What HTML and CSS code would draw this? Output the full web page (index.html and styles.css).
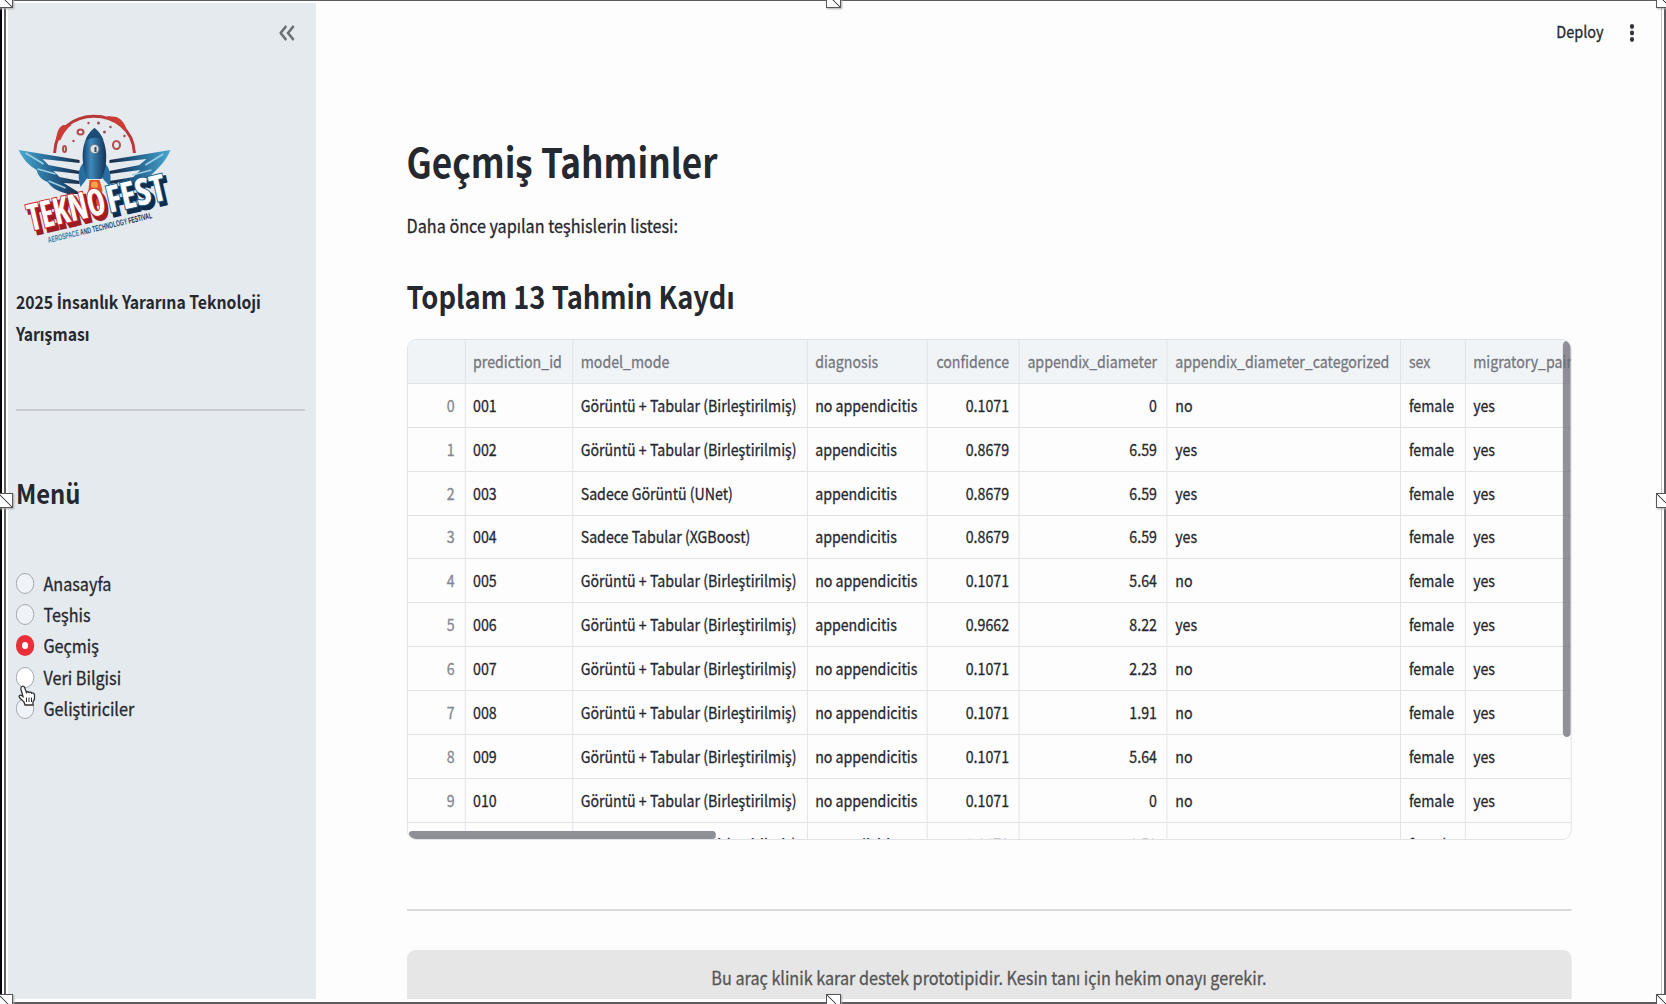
FILE: index.html
```html
<!DOCTYPE html>
<html lang="tr">
<head>
<meta charset="utf-8">
<title>Geçmiş Tahminler</title>
<link rel="stylesheet" href="styles.css">
</head>
<body>
<div class="stage">
  <div class="app">
    <aside class="sidebar">
      <div class="collapse">
        <svg width="18" height="16" viewBox="0 0 18 16"><path d="M8 1 1.500 8 8 15M16.500 1 10 8 16.500 15" fill="none" stroke="#6b6e75" stroke-width="2.600"/></svg>
      </div>
      <svg class="logo" width="178" height="136" viewBox="0 0 156 136" preserveAspectRatio="none">
        <defs>
          <linearGradient id="wing" x1="0" x2="1"><stop offset="0" stop-color="#49a9d2"/><stop offset=".6" stop-color="#215b86"/><stop offset="1" stop-color="#1b2740"/></linearGradient>
          <linearGradient id="wing2" x1="1" x2="0"><stop offset="0" stop-color="#49a9d2"/><stop offset=".6" stop-color="#215b86"/><stop offset="1" stop-color="#1b2740"/></linearGradient>
          <linearGradient id="hull" x1="0" x2="1"><stop offset="0" stop-color="#15406c"/><stop offset=".35" stop-color="#3f8abb"/><stop offset="1" stop-color="#123358"/></linearGradient>
        </defs>
        <path d="M37 39C39-10 114-10 117 39" fill="none" stroke="#b9383a" stroke-width="3"/>
        <path d="M38 27C40 17 41 13 46 11L54 11C49 15 46 19 43 26ZM90 2 99 3C104 5 108 10 110 18 104 14 99 8 90 5Z" fill="#cc3b34"/>
        <g fill="none" stroke="#b34a4d" stroke-width="2"><ellipse cx="63" cy="18" rx="3" ry="2.500"/><ellipse cx="99" cy="31" rx="3.500" ry="4"/><ellipse cx="47" cy="35" rx="1.500" ry="3"/></g>
        <g fill="#a05058"><circle cx="71" cy="9" r="1.200"/><circle cx="81" cy="9" r="1.500"/><circle cx="87" cy="18" r="1.500"/><circle cx="56" cy="27" r="1.200"/><circle cx="107" cy="22" r="1.300"/><circle cx="93" cy="13" r="1.200"/></g>
        <path d="M1 36 62 46V49L25 45 31 51 62 57V60L36 57 42 63 62 67V70L46 69 64 80H50C40 77 34 74 30 68 24 66 20 61 19 56 12 52 5 45 1 36Z" fill="url(#wing)"/>
        <path d="M8 39 26 50M20 55 38 60M31 67 48 74" stroke="#9fcfe4" stroke-width="1.500"/>
        <path d="M153 36 92 46V49L129 45 122 51 92 57V60L123 56 116 63 92 67V70L112 67 98 75 128 66C135 60 149 48 153 36Z" fill="url(#wing2)"/>
        <path d="M146 40 128 51M134 56 115 61" stroke="#9fcfe4" stroke-width="1.500"/>
        <path d="M67 48C59 54 61 66 63 73L72 61ZM86 48C94 54 94 66 92 72L82 61Z" fill="#286d9f"/>
        <path d="M77 14C62 26 63 49 70 65H84C92 48 90 24 77 14Z" fill="url(#hull)"/>
        <path d="M77 14C72 18 69 22 68 27Q77 21 86 26C84 21 81 17 77 14Z" fill="#1d4c76"/>
        <circle cx="77" cy="35" r="4.500" fill="#dfe3e2" stroke="#61788b"/><path d="M78 33V38" stroke="#37465a" stroke-width="2"/>
        <path d="M72 66H82L85 76 82 92H74L71 76Z" fill="#e65228"/><circle cx="77" cy="71" r="3.500" fill="#fba447"/>
        <g transform="translate(13 116) rotate(-13)" class="wordmark">
          <text x="2" y="5" textLength="79" lengthAdjust="spacingAndGlyphs" fill="#9c1c24" stroke="#9c1c24" stroke-width="3.500">TEKNO</text>
          <text x="83" y="5" textLength="60" lengthAdjust="spacingAndGlyphs" fill="#102c4b" stroke="#102c4b" stroke-width="3.500">FEST</text>
          <text x="0" y="1" textLength="79" lengthAdjust="spacingAndGlyphs" fill="#fff" stroke="#c8242c" stroke-width="2">TEKNO</text>
          <text x="81" y="1" textLength="60" lengthAdjust="spacingAndGlyphs" fill="#fff" stroke="#22608f" stroke-width="2">FEST</text>
        </g>
        <text class="tagline" transform="translate(31 129) rotate(-13.500)" textLength="107" lengthAdjust="spacingAndGlyphs"><tspan fill="#367ea8">AEROSPACE </tspan><tspan fill="#234f77">AND TECHNOLOGY </tspan><tspan fill="#1c2940">FESTIVAL</tspan></text>
      </svg>
      <p class="contest">2025 <span class="dotted-i">İ</span>nsanlık Yararına Teknoloji Yarışması</p>
      <hr class="side-rule">
      <h3 class="menu-title">Menü</h3>
      <nav class="menu">
        <label><i class="radio"></i>Anasayfa</label>
        <label><i class="radio"></i>Teşhis</label>
        <label><i class="radio on"></i>Geçmiş</label>
        <label><i class="radio hover"></i>Veri Bilgisi</label>
        <label><i class="radio"></i>Geliştiriciler</label>
      </nav>
    </aside>
    <main class="main">
      <header class="toolbar"><span>Deploy</span><svg width="6" height="20" viewBox="0 0 6 20" fill="#31333f"><circle cx="3" cy="3.500" r="2.400"/><circle cx="3" cy="10" r="2.400"/><circle cx="3" cy="16.500" r="2.400"/></svg></header>
      <h1>Geçmiş Tahminler</h1>
      <p class="lead">Daha önce yapılan teşhislerin listesi:</p>
      <h2>Toplam 13 Tahmin Kaydı</h2>
      <div class="table" id="table"><div class="vbar"></div><div class="hbar"></div></div>
      <hr class="rule">
      <footer class="note">Bu araç klinik karar destek prototipidir. Kesin tanı için hekim onayı gerekir.</footer>
    </main>
  </div>
  <svg class="cursor" width="18" height="22" viewBox="0 0 18 22"><path d="M4 1.500C5.500.5 6.500 2 7 3.500L8.500 7.500C9 6.500 10.500 6.500 11 7.500 12 6.700 13.500 7 13.700 8.200 15 7.500 16.500 8.500 16.500 10V14L15 17V20H7L6 17 1.500 12.500C.5 11 2 9.500 3.500 10.500L5 11.500 3 4.500C2.700 3 3 2 4 1.500Z" fill="#fff" stroke="#303030" stroke-width="1.300"/><path d="M8.500 12.500V17M11 12.500V17M13.500 12.500V17" stroke="#303030"/></svg>
  <div class="frame"></div>
  <i class="handle t l"></i><i class="handle t c"></i><i class="handle t r"></i>
  <i class="handle m l"></i><i class="handle m r"></i>
  <i class="handle b l"></i><i class="handle b c"></i><i class="handle b r"></i>
</div>
<script src="table.js"></script>
</body>
</html>
```
FILE: styles.css
```css
* { box-sizing: border-box; }
body { margin: 0; background: #fff; }
h1, h2, h3, p, hr { margin: 0; border: 0; }

.stage {
  position: relative;
  width: 1666px;
  height: 1004px;
  padding: 3px 0 0 8px;
  overflow: hidden;
  font-family: "Noto Sans CJK JP", "Noto Sans", sans-serif;
  color: #262830;
}

/* The whole app is shown narrowed to 87.5% of its natural width. */
.app {
  display: flex;
  width: 1890px;
  height: 996px;
  transform: scaleX(.875);
  transform-origin: 0 0;
  overflow: hidden;
  -webkit-text-stroke: .3px;
}

.sidebar { width: 352px; padding: 0 12px 0 9px; background: #e5eaee; flex: none; }
.collapse { height: 111px; padding: 22px 12px 0 0; text-align: right; line-height: 0; }
.logo { display: block; margin-left: 2px; overflow: visible; -webkit-text-stroke: 0; }
.wordmark { font: 700 37px "Open Sans", sans-serif; font-stretch: condensed; paint-order: stroke; }
.tagline { font: 700 8.500px "Liberation Sans", sans-serif; }
.contest { margin-top: 36px; font-size: 18px; font-weight: 700; line-height: 31.500px; -webkit-text-stroke: 0; }
.dotted-i { font-family: "Open Sans", sans-serif; font-size: 18px; line-height: 1; }
.side-rule { width: 330px; height: 2px; margin-top: 60px; background: #c8ccd2; }
.menu-title { margin-top: 63px; font-size: 27.200px; font-weight: 700; line-height: 36px; -webkit-text-stroke: 0; }
.menu { display: flex; flex-direction: column; margin-top: 57.500px; }
.menu label { display: flex; align-items: center; gap: 10.500px; height: 31.350px; font-size: 18.500px; line-height: 29px; }
.radio { width: 21px; height: 21px; border: 1px solid #a0a3aa; border-radius: 50%; background: #f0f3f7; }
.radio.on { border: 7px solid #ea2f3a; background: #fff; }
.radio.hover { background: #fff; }

.main { flex: 1; min-width: 0; padding: 0 103.500px 0 103.500px; background: #fdfdfd; }
.toolbar { display: flex; justify-content: flex-end; align-items: center; gap: 29px; height: 59px; margin-right: -72px; font-size: 16.500px; }
.toolbar span { margin-top: -3px; }
h1 { margin-top: 72px; font-size: 40.200px; font-weight: 700; line-height: 54px; -webkit-text-stroke: 0; }
.lead { margin-top: 21px; font-size: 18.500px; line-height: 32px; }
h2 { margin-top: 34px; font-size: 31.200px; font-weight: 700; line-height: 42px; -webkit-text-stroke: 0; }

.table { position: relative; height: 501px; margin-top: 21.600px; border: 1px solid #dfe1e4; border-radius: 10px; overflow: hidden; font-size: 16.200px; }
.row { display: grid; grid-template-columns: 66px 123px 268px 137px 105.500px 169px 267px 73.500px 180px; height: 43.900px; line-height: 43px; }
.row span { padding: 0 9px; border-right: 1px solid #dfe1e4; border-bottom: 1px solid #e1e3e6; white-space: nowrap; }
.row .num { text-align: right; padding-right: 11px; }
.row .idx { color: #85878d; }
.row.head { height: 44.200px; color: #74777e; background: #f0f4f7; }
.vbar { position: absolute; right: 0; top: 1px; width: 9px; height: 396px; border-radius: 5px; background: rgba(110, 110, 120, .76); }
.hbar { position: absolute; left: 1px; bottom: 0; width: 351px; height: 8px; border-radius: 5px; background: #8f8f97; }

.rule { height: 2px; margin-top: 69px; background: #d9dadd; }
.note { height: 60px; margin-top: 39.500px; border-radius: 9px; background: #e6e6e6; color: #555; text-align: center; font-size: 18.500px; line-height: 55px; }

.cursor { position: absolute; left: 18px; top: 685px; }
.frame { position: absolute; inset: 0; border-top: 1px solid #5d5b60; border-bottom: 2px solid #5d5b60; border-right: 2px solid #5d5b60; border-left: 2px solid #05060c; box-shadow: inset 2px 0 #fff, inset 4px 0 #5d5b60, inset 6px 2px #fff, inset -2px -2px #fff, inset -3px 0 #c0c0c0; }
.handle { position: absolute; width: 15px; height: 15px; border: 1px solid #55555a; background: linear-gradient(45deg, #fff 46%, #444 47%, #444 53%, #fff 54%); box-shadow: 1px 1px 2px #aaa; }
.t { top: -7px; } .m { top: 493px; } .b { top: 994px; }
.l { left: -2px; } .c { left: 826px; } .r { left: 1656px; }
```
FILE: table.js
```js
const head = ["", "prediction_id", "model_mode", "diagnosis", "confidence", "appendix_diameter", "appendix_diameter_categorized", "sex", "migratory_pain"];
const both = "Görüntü + Tabular (Birleştirilmiş)";
const data = [
  [both, "no appendicitis", "0.1071", "0", "no"],
  [both, "appendicitis", "0.8679", "6.59", "yes"],
  ["Sadece Görüntü (UNet)", "appendicitis", "0.8679", "6.59", "yes"],
  ["Sadece Tabular (XGBoost)", "appendicitis", "0.8679", "6.59", "yes"],
  [both, "no appendicitis", "0.1071", "5.64", "no"],
  [both, "appendicitis", "0.9662", "8.22", "yes"],
  [both, "no appendicitis", "0.1071", "2.23", "no"],
  [both, "no appendicitis", "0.1071", "1.91", "no"],
  [both, "no appendicitis", "0.1071", "5.64", "no"],
  [both, "no appendicitis", "0.1071", "0", "no"],
  [both, "appendicitis", "0.8679", "6.59", "yes"]
];
const table = document.getElementById("table");
const bars = table.firstChild;
const numeric = { 0: "num idx", 4: "num", 5: "num" };
function addRow(cells, kind) {
  const row = document.createElement("div");
  row.className = "row " + kind;
  cells.forEach((text, i) => {
    const cell = document.createElement("span");
    cell.className = numeric[i] || "";
    cell.textContent = text;
    row.append(cell);
  });
  table.insertBefore(row, bars);
}
addRow(head, "head");
data.forEach((d, i) => addRow([String(i), String(i + 1).padStart(3, "0"), ...d, "female", "yes"], ""));
```
